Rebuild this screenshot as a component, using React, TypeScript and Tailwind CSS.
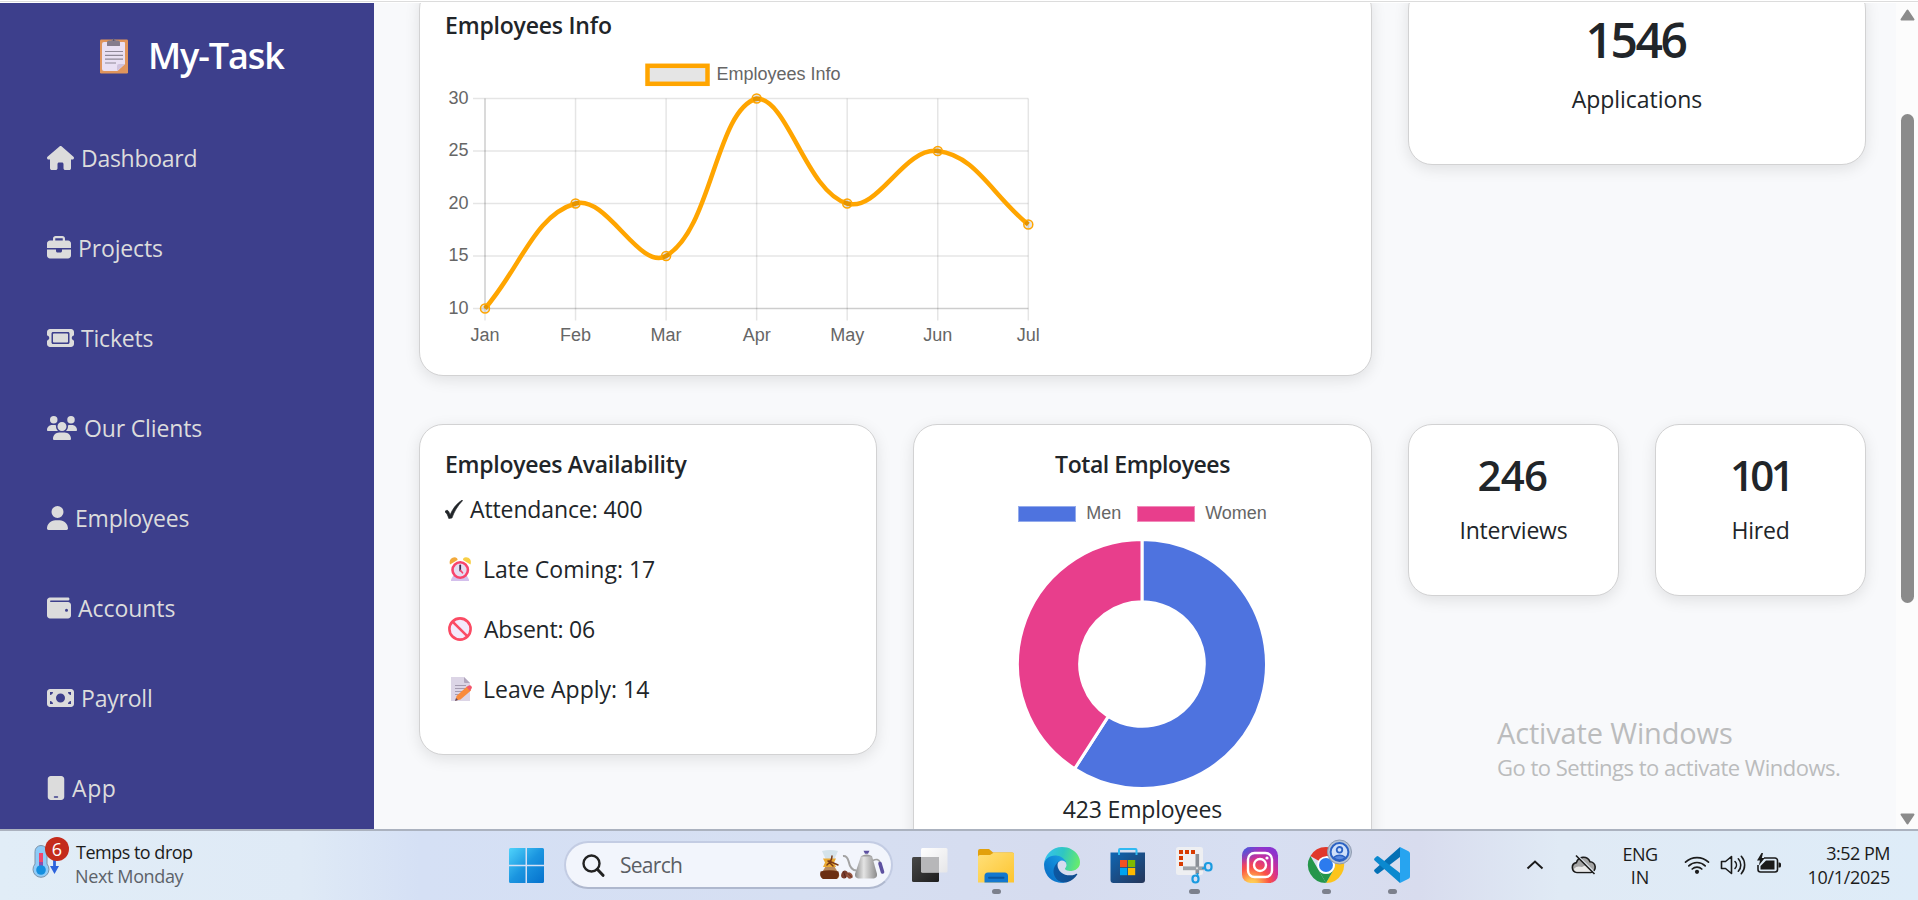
import React from "react";
import { FaHouse, FaBriefcase, FaTicket, FaUsers, FaUser, FaWallet, FaMoneyBill, FaMobile } from "react-icons/fa6";

const nav = [
  { label: "Dashboard", Icon: FaHouse, box: "w-[27px]", track: "tracking-[-0.27px]" },
  { label: "Projects", Icon: FaBriefcase, box: "w-6", track: "tracking-[-0.14px]" },
  { label: "Tickets", Icon: FaTicket, box: "w-[27px]", track: "tracking-[-0.2px]" },
  { label: "Our Clients", Icon: FaUsers, box: "w-[30px]", track: "tracking-[-0.15px]" },
  { label: "Employees", Icon: FaUser, box: "w-[21px]", track: "tracking-[-0.2px]" },
  { label: "Accounts", Icon: FaWallet, box: "w-6", track: "tracking-[-0.05px]" },
  { label: "Payroll", Icon: FaMoneyBill, box: "w-[27px]", track: "tracking-[-0.2px]" },
  { label: "App", Icon: FaMobile, box: "w-[18px]", track: "tracking-[0.6px]" },
];

function ClipboardIcon() {
  return (
    <svg className="h-9 w-7" viewBox="0 0 28 36">
      <rect x="0" y="1.5" width="28" height="34" rx="1.2" fill="#e0955c" />
      <path d="M4 4h20a1 1 0 0 1 1 1v21l-7.500 7H4a2 2 0 0 1-2-2V6a2 2 0 0 1 2-2z" fill="#e9e0f3" />
      <path d="M25 26h-6a2 2 0 0 0-2 2v5z" fill="#cfc2dc" />
      <path d="M7 7.500V4.500a2 2 0 0 1 2-2h2.500a2.300 2.300 0 0 1 4.500 0H18a2 2 0 0 1 2 2v3a.6.6 0 0 1-.6.600H7.600A.6.6 0 0 1 7 7.500z" fill="#857c8c" />
      <circle cx="13.700" cy="2" r=".8" fill="#4c4454" />
      <path d="M5 13.500h18M5 17.300h18M5 21.200h18M5 25h11" stroke="#8f8898" strokeWidth="1.200" />
    </svg>
  );
}

function AlarmIcon() {
  return (
    <svg className="h-6 w-6" viewBox="0 0 24 24">
      <path d="M4 19l-2 3.500V24h18v-1.500L18 19z" fill="#d3bfec" />
      <path d="M1 7.500C-.3 3 2 .4 5.500.2 7.500.2 8.800 1.500 8.500 3z" fill="#f2a93b" />
      <path d="M21.500 7.500C22.800 3 20.500.4 17 .2c-2 0-3.300 1.300-3 2.800z" fill="#f8cf45" />
      <circle cx="11.200" cy="13" r="7.700" fill="#e6ddf2" stroke="#f8446d" strokeWidth="2.600" />
      <path d="M11.200 8.500v5" stroke="#3c2b50" strokeWidth="1.800" strokeLinecap="round" />
      <path d="M11.500 13.500l2 2.300" stroke="#f8446d" strokeWidth="1.700" strokeLinecap="round" />
    </svg>
  );
}

function BlockedIcon() {
  return (
    <svg className="h-6 w-6" viewBox="0 0 24 24">
      <circle cx="12" cy="12" r="10.600" fill="#f4e9fb" stroke="#fb4a63" strokeWidth="2.600" />
      <path d="M4.800 4.800l14.400 14.400" stroke="#fb4a63" strokeWidth="2.600" />
    </svg>
  );
}

function MemoIcon() {
  return (
    <svg className="h-6 w-6" viewBox="0 0 24 24">
      <path d="M1 0h13l6 6v18H1z" fill="#dcd5e6" />
      <path d="M14 0l6 6h-5a1 1 0 0 1-1-1z" fill="#b1a6bd" />
      <path d="M5 8.500h11M5 11.500h11M5 14.500h9M5 17.500h5" stroke="#a49bb0" strokeWidth="1.100" />
      <path d="M5.500 23.500l1-4.500L17 9.500l4 4L10.500 22.500z" fill="#f98b3c" />
      <path d="M16.500 10l1.800-1.200a2.200 2.200 0 0 1 3 3.200L20 14z" fill="#f3566b" />
      <path d="M5 24l1-3 2 2z" fill="#5b4760" />
    </svg>
  );
}

function CheckIcon() {
  return (
    <svg className="h-[19px] w-[18px]" viewBox="0 0 18 19">
      <path d="M0 11.500c1.500-1.600 3-1.700 4.200 1l.9 2.300C7.800 8.500 11.500 3.600 17.200 0l.3.700C12.500 6 9.300 11.300 7 18l-3.200.6C2.800 15.500 1.800 12.700 0 11.900z" fill="#212529" stroke="#212529" strokeWidth=".6" />
    </svg>
  );
}

const months = ["Jan", "Feb", "Mar", "Apr", "May", "Jun", "Jul"];
const values = [10, 20, 15, 30, 20, 25, 18];
const LEFT = 40;
const TOP = 46.5;
const BOTTOM = 256.5;
const STEP = 90.55;
const points = values.map((v, i) => ({ x: LEFT + i * STEP, y: BOTTOM - (v - 10) * 10.5 }));

function smoothPath() {
  const clamp = (y: number) => Math.min(BOTTOM, Math.max(TOP, y));
  const controls = points.map((p, i) => {
    const a = points[i - 1] ?? p;
    const b = points[i + 1] ?? p;
    const d0 = Math.hypot(p.x - a.x, p.y - a.y);
    const d1 = Math.hypot(b.x - p.x, b.y - p.y);
    const f0 = (0.4 * d0) / (d0 + d1);
    const f1 = (0.4 * d1) / (d0 + d1);
    return {
      px: p.x - f0 * (b.x - a.x),
      py: clamp(p.y - f0 * (b.y - a.y)),
      nx: p.x + f1 * (b.x - a.x),
      ny: clamp(p.y + f1 * (b.y - a.y)),
    };
  });
  return points
    .map((p, i) =>
      i === 0
        ? `M${p.x} ${p.y}`
        : `C${controls[i - 1].nx} ${controls[i - 1].ny} ${controls[i].px} ${controls[i].py} ${p.x} ${p.y}`
    )
    .join("");
}

function LineChart() {
  return (
    <svg className="h-[300px] w-[620px] font-['Liberation_Sans',sans-serif] text-[18px]" viewBox="0 0 620 300">
      <rect x="202.500" y="13.800" width="60" height="18" fill="#e5e5e5" stroke="#ffa500" strokeWidth="4.500" />
      <text x="271.500" y="28" fill="#666">Employees Info</text>
      {[30, 25, 20, 15, 10].map((v, i) => (
        <g key={v}>
          <path d={`M28 ${TOP + i * 52.5}H${LEFT + 6 * STEP}`} stroke="#000" strokeOpacity="0.1" strokeWidth="1.500" />
          <text x="23.500" y={TOP + i * 52.5 + 5.3} textAnchor="end" fill="#666">{v}</text>
        </g>
      ))}
      {months.map((m, i) => (
        <g key={m}>
          <path d={`M${LEFT + i * STEP} ${TOP}V268.500`} stroke="#000" strokeOpacity="0.1" strokeWidth="1.500" />
          <text x={LEFT + i * STEP} y="289" textAnchor="middle" fill="#666">{m}</text>
        </g>
      ))}
      <path d={`M${LEFT} ${TOP}V${BOTTOM}H${LEFT + 6 * STEP}`} fill="none" stroke="#000" strokeOpacity="0.1" strokeWidth="1.500" />
      <path d={smoothPath()} fill="none" stroke="#ffa500" strokeWidth="4.500" />
      {points.map((p) => (
        <circle key={p.x} cx={p.x} cy={p.y} r="4.500" fill="#000" fillOpacity="0.1" stroke="#ffa500" strokeWidth="1.500" />
      ))}
    </svg>
  );
}

function sector(from: number, to: number) {
  const at = (r: number, t: number) => `${125 + r * Math.sin(t * 2 * Math.PI)} ${125 - r * Math.cos(t * 2 * Math.PI)}`;
  const big = to - from > 0.5 ? 1 : 0;
  return `M${at(124.5, from)}A124.5 124.5 0 ${big} 1 ${at(124.5, to)}L${at(62.3, to)}A62.3 62.3 0 ${big} 0 ${at(62.3, from)}Z`;
}

function Donut() {
  const men = 250 / 423;
  return (
    <svg className="h-[250px] w-[250px]" viewBox="0 0 250 250">
      <path d={sector(0, men)} fill="#4e73df" stroke="#fff" strokeWidth="3" />
      <path d={sector(men, 1)} fill="#e83e8c" stroke="#fff" strokeWidth="3" />
    </svg>
  );
}

const cardBase = "border border-[#d2d2d3] bg-white p-[25px] shadow-[0_4px_15px_rgba(0,0,0,0.1)] rounded-3xl";

function Stat({ value, label, track }: { value: string; label: string; track: string }) {
  return (
    <div className={`${cardBase} h-[172px] w-[211px] text-center`}>
      <h3 className={`mb-3 text-[42px] font-semibold leading-[50px] ${track}`}>{value}</h3>
      <p className="-mx-2 leading-9 tracking-[-0.2px]">{label}</p>
    </div>
  );
}

function Sidebar() {
  return (
    <aside className="w-[374px] shrink-0 overflow-hidden bg-[#3d3f8c] text-white">
      <div className="flex items-start pl-[100px] pt-[30px]">
        <div className="pt-[5px]"><ClipboardIcon /></div>
        <h1 className="ml-5 mt-px text-[36px] font-semibold leading-[44px] tracking-[-1.1px]">My-Task</h1>
      </div>
      <nav className="mt-[62px] flex flex-col gap-[54px] pl-[47px] text-[#dcdcdc]">
        {nav.map(({ label, Icon, box, track }) => (
          <a key={label} className="flex h-9 items-center gap-[7px]">
            <span className={`flex shrink-0 justify-center text-[24px] ${box}`}>
              <Icon className="h-6 w-full" />
            </span>
            <span className={`text-[23px] leading-9 ${track}`}>{label}</span>
          </a>
        ))}
      </nav>
    </aside>
  );
}

function Main() {
  return (
    <main className="relative w-[1522px] shrink-0 overflow-hidden bg-[#f8f9fb] pl-[45px] text-[23px] text-[#212529]">
      <div className="-mt-[18px] flex items-start gap-9">
        <section className={`${cardBase} h-[391px] w-[953px]`}>
          <h5 className="mb-3 font-semibold leading-[29px] tracking-[-0.2px]">Employees Info</h5>
          <LineChart />
        </section>
        <section className={`${cardBase} h-[180px] w-[458px] text-center`}>
          <h2 className="mb-3 pr-[3px] text-[48px] font-semibold leading-[58px] tracking-[-2.4px]">1546</h2>
          <p className="leading-9 tracking-[-0.05px]">Applications</p>
        </section>
      </div>

      <div className="mt-12 flex items-start gap-9">
        <section className={`${cardBase} h-[331px] w-[458px]`}>
          <h5 className="mb-3 font-semibold leading-[29px] tracking-[-0.27px]">Employees Availability</h5>
          <ul className="flex flex-col gap-6 leading-9">
            <li className="flex items-center tracking-[-0.12px]">
              <CheckIcon />
              <span className="ml-[7px]">Attendance: 400</span>
            </li>
            <li className="flex items-center pl-1">
              <AlarmIcon />
              <span className="ml-[10px]">Late Coming: 17</span>
            </li>
            <li className="flex items-center pl-[3px] tracking-[-0.22px]">
              <BlockedIcon />
              <span className="ml-[12px]">Absent: 06</span>
            </li>
            <li className="flex items-center pl-1">
              <span className="ml-[1px] -mr-[1px]"><MemoIcon /></span>
              <span className="ml-[10px]">Leave Apply: 14</span>
            </li>
          </ul>
        </section>

        <section className={`${cardBase} flex h-[480px] w-[459px] flex-col items-center`}>
          <h5 className="font-semibold leading-[29px] tracking-[-0.44px]">Total Employees</h5>
          <div className="mt-6 flex h-[20px] items-center font-['Liberation_Sans',sans-serif] text-[18px] leading-5 text-[#666]">
            <span className="mt-[2px] h-4 w-[58px] border border-white/40 bg-[#4e73df]" />
            <span className="ml-[10px]">Men</span>
            <span className="ml-4 mt-[2px] h-4 w-[58px] border border-white/40 bg-[#e83e8c]" />
            <span className="ml-[10px]">Women</span>
          </div>
          <div className="mt-[16px] pr-[2px]"><Donut /></div>
          <p className="mt-[2px] leading-9 tracking-[-0.17px]">423 Employees</p>
        </section>

        <Stat value="246" label="Interviews" track="pr-[2px] tracking-[-0.76px]" />
        <Stat value="101" label="Hired" track="tracking-[-3.6px]" />
      </div>

      <div className="absolute left-[1123px] top-[706px] text-[#bbbcbd]">
        <p className="text-[29px] leading-[48px] tracking-[-0.15px]">Activate Windows</p>
        <p className="-mt-[2px] text-[22px] leading-[24px] tracking-[-0.49px]">Go to Settings to activate Windows.</p>
      </div>
    </main>
  );
}

function Scrollbar() {
  return (
    <div className="flex w-[22px] shrink-0 flex-col items-center bg-[#fcfcfc] pb-[4px] pt-[6px]">
      <svg className="h-3 w-[15px]" viewBox="0 0 15 12">
        <path d="M7.500 1.500L13.500 10.500H1.500z" fill="#8b8b8b" stroke="#8b8b8b" strokeWidth="2" strokeLinejoin="round" />
      </svg>
      <div className="mt-[93px] h-[489px] w-[13px] rounded-full bg-[#8b8b8b]" />
      <svg className="mt-auto h-3 w-[15px]" viewBox="0 0 15 12">
        <path d="M7.500 10.500L13.500 1.500H1.500z" fill="#8b8b8b" stroke="#8b8b8b" strokeWidth="2" strokeLinejoin="round" />
      </svg>
    </div>
  );
}

function Defs() {
  return (
    <svg className="absolute h-0 w-0">
      <defs>
        <linearGradient id="win" x1="0" y1="0" x2="1" y2="1">
          <stop offset="0" stopColor="#4fd3fb" />
          <stop offset=".5" stopColor="#1b95e0" />
          <stop offset="1" stopColor="#0571cd" />
        </linearGradient>
        <linearGradient id="folder" x1="0" y1="0" x2="1" y2="1">
          <stop offset="0" stopColor="#ffe07a" />
          <stop offset="1" stopColor="#fdc52f" />
        </linearGradient>
        <linearGradient id="edgeDark" x1="0" y1="0" x2="1" y2="0">
          <stop offset="0" stopColor="#0c59a4" />
          <stop offset="1" stopColor="#114a8b" />
        </linearGradient>
        <linearGradient id="edgeMid" x1=".9" y1=".2" x2=".2" y2=".9">
          <stop offset="0" stopColor="#1b9de2" />
          <stop offset=".5" stopColor="#0f86d6" />
          <stop offset="1" stopColor="#0a6fc6" />
        </linearGradient>
        <linearGradient id="edgeLight" x1="0" y1=".3" x2="1" y2=".5">
          <stop offset="0" stopColor="#35c1f1" />
          <stop offset=".5" stopColor="#2fc6c2" />
          <stop offset="1" stopColor="#66eb6e" />
        </linearGradient>
        <linearGradient id="store" x1="0" y1="0" x2="1" y2="1">
          <stop offset="0" stopColor="#0f66b4" />
          <stop offset="1" stopColor="#253558" />
        </linearGradient>
        <radialGradient id="insta" cx=".27" cy="1.070" r="1.100">
          <stop offset="0" stopColor="#ffd75e" />
          <stop offset=".15" stopColor="#ffc24f" />
          <stop offset=".45" stopColor="#fb5245" />
          <stop offset=".7" stopColor="#d42f93" />
          <stop offset="1" stopColor="#8b34cf" />
        </radialGradient>
        <radialGradient id="instaBlue" cx="0" cy="0" r=".5">
          <stop offset="0" stopColor="#3d5fe0" />
          <stop offset="1" stopColor="#3d5fe0" stopOpacity="0" />
        </radialGradient>
        <linearGradient id="glass" x1="0" y1="0" x2="1" y2="1">
          <stop offset="0" stopColor="#fff" />
          <stop offset="1" stopColor="#e6e6e8" />
        </linearGradient>
        <linearGradient id="dark" x1="0" y1="0" x2="1" y2="1">
          <stop offset="0" stopColor="#484848" />
          <stop offset="1" stopColor="#1d1d1d" />
        </linearGradient>
        <linearGradient id="kettle" x1="0" y1="0" x2="1" y2="0">
          <stop offset="0" stopColor="#8e8e8e" />
          <stop offset=".4" stopColor="#e4e4e4" />
          <stop offset="1" stopColor="#8a8a8a" />
        </linearGradient>
      </defs>
    </svg>
  );
}

function CoffeeArt() {
  return (
    <svg className="h-[30px] w-[66px]" viewBox="0 0 66 30">
      <path d="M3 1q8-2 16 0l-4 9H7z" fill="#d5e3ea" />
      <path d="M7.500 15h7l5.500 9q1 3-2 5H4q-3-2-2-5z" fill="#b98a5e" />
      <path d="M1.500 21.500q9-2.500 18 0 1.500 5-2 7.500H4q-4-2.500-2.500-7.500z" fill="#6b2f12" />
      <path d="M4 8.500h13l-2 4 2 4.500H4l2-4.500z" fill="#eaa932" />
      <path d="M13 6q0 5-5 9M10 11l9 4M9 11l5 5" fill="none" stroke="#7a3a17" strokeWidth="1.500" strokeLinecap="round" />
      <ellipse cx="25.500" cy="24.500" rx="3.200" ry="4" transform="rotate(20 25.500 24.500)" fill="#7c3d2c" />
      <ellipse cx="30.500" cy="25.500" rx="2.800" ry="3.400" transform="rotate(-40 30.500 25.500)" fill="#95523c" />
      <path d="M24.500 21.500l2 6M29 23.500l4 4" stroke="#4e2117" strokeWidth=".8" />
      <path d="M24 6q4-.5 5.500 5 2 9.500 8 9.500" fill="none" stroke="#a3a3a3" strokeWidth="2" />
      <path d="M42 6q5.500-3 11 0l5 18q.5 3.500-3 4.500H39q-3.500-1-3-4.500z" fill="url(#kettle)" />
      <path d="M42 6.500q5.500-4 11 0z" fill="#9d9d9d" />
      <path d="M44.500.8h6l-1.500 3h-3z" fill="#5d51a0" />
      <path d="M54 10.500q5-2.500 7 1.500" fill="none" stroke="#a0a0a0" strokeWidth="1.600" />
      <path d="M61 13.500l2.500 8.500" stroke="#5d51a0" strokeWidth="3.600" strokeLinecap="round" />
    </svg>
  );
}

const dot = (w: string) => <span className={`mt-[6px] h-[5px] rounded-full bg-[#7c808c] ${w}`} />;

function AppSlot({ children, mark }: { children: React.ReactNode; mark?: string }) {
  return (
    <div className="flex h-[69px] w-[66px] flex-col items-center pt-[16px]">
      {children}
      {mark && dot(mark)}
    </div>
  );
}

function Taskbar() {
  const icon = "h-9 w-9 shrink-0 overflow-visible";
  return (
    <footer className="flex h-[71px] shrink-0 items-start border-t-2 border-[#abb2bf] bg-[linear-gradient(90deg,#e1edf7_0px,#dfeaf6_300px,#d5e0f5_420px,#d6dff2_800px,#d6dcef_1050px,#d7dff2_1250px,#d8dcee_1420px,#e0eaf5_1560px,#deecf8_1918px)] text-[18px] text-[#1b1b1b]">
      <div className="flex w-[505px] pl-[31px] pt-[7px]">
        <div className="relative h-[45px] w-[38px]">
          <svg className="h-[45px] w-[38px]" viewBox="0 0 38 45">
            <path d="M4 13.500a6 6 0 0 1 12 0v12.500a8 8 0 1 1-12 0z" fill="#8ecbf8" stroke="#7d93a8" strokeWidth="1" />
            <path d="M10 15v15" stroke="#f0476e" strokeWidth="4" />
            <path d="M10 24v6" stroke="#8a4fae" strokeWidth="4" />
            <circle cx="10" cy="32" r="4.800" fill="#148fdf" />
            <path d="M23.500 20v9" stroke="#2c62dc" strokeWidth="2.800" />
            <path d="M19 28h9l-4.500 8z" fill="#2c62dc" />
          </svg>
          <span className="absolute left-[14px] top-[-1px] flex h-6 w-6 items-center justify-center rounded-full bg-[#c42b1c] text-[18px] leading-none text-white">6</span>
        </div>
        <div className="ml-[7px] leading-6">
          <p className="mt-[2px] tracking-[-0.5px]">Temps to drop</p>
          <p className="-ml-px tracking-[-0.37px] text-[#5c6269]">Next Monday</p>
        </div>
      </div>

      <div className="w-[60px] pl-[4px] pt-[17px]">
        <svg className="h-[35px] w-[35px]" viewBox="0 0 35 35">
          <path d="M1.500 0H16.500V16.800H0V1.500A1.500 1.500 0 0 1 1.500 0zM18 0H33.500A1.500 1.500 0 0 1 35 1.500V16.800H18zM0 18.200H16.500V35H1.500A1.500 1.500 0 0 1 0 33.500zM18 18.200H35V33.500A1.500 1.500 0 0 1 33.500 35H18z" fill="url(#win)" />
        </svg>
      </div>

      <div className="-ml-px mt-[10px] flex h-[48px] w-[329px] items-center rounded-full border-2 border-[#c3cce3] border-b-[#afb8ce] bg-[#f2f5fc] pl-[16px]">
        <svg className="h-[23px] w-[23px]" viewBox="0 0 23 23">
          <circle cx="9.500" cy="9.500" r="8" fill="none" stroke="#222" strokeWidth="2.400" />
          <path d="M15.300 15.300l5.700 6" stroke="#222" strokeWidth="3" strokeLinecap="round" />
        </svg>
        <span className="ml-[15px] text-[21px] leading-none tracking-[-0.72px] text-[#5b5e64]">Search</span>
        <span className="ml-auto mr-[6px]"><CoffeeArt /></span>
      </div>

      <div className="flex pl-[4px]">
        <AppSlot>
          <svg className={icon} viewBox="0 0 36 36">
            <rect x="0" y="10" width="27" height="25" rx="1.500" fill="url(#dark)" />
            <rect x="9" y="1" width="26.500" height="24.500" rx="1.500" fill="url(#glass)" />
            <path d="M9 10h18v15.500H10.500a1.500 1.500 0 0 1-1.500-1.500z" fill="#b7b7b9" />
          </svg>
        </AppSlot>
        <AppSlot mark="w-[9px]">
          <svg className={icon} viewBox="0 0 36 36">
            <path d="M0 4a2 2 0 0 1 2-2h9l4 3.500h19a2 2 0 0 1 2 2V14H0z" fill="#e2a10c" />
            <path d="M0 9.500A2 2 0 0 1 2 8h10l4-2.500h18.500A1.500 1.500 0 0 1 36 7v28.500H0z" fill="url(#folder)" />
            <path d="M6.500 35.500v-6.500a3.500 3.500 0 0 1 3.500-3.500h16.500a3.500 3.500 0 0 1 3.500 3.500v6.500z" fill="#1378cf" />
            <path d="M11 30.700h14.500" stroke="#0b56a0" strokeWidth="2" strokeLinecap="round" />
          </svg>
        </AppSlot>
        <AppSlot>
          <svg className={icon} viewBox="0 0 256 256">
            <path fill="url(#edgeDark)" d="M231 190.500c-3.400 1.800-6.900 3.400-10.500 4.700a101.500 101.500 0 0 1-35.900 6.500c-47.300 0-88.500-32.500-88.500-74.300.1-11.400 6.400-21.900 16.400-27.300-42.800 1.800-53.800 46.400-53.800 72.500 0 73.900 68.100 81.400 82.800 81.400 7.900 0 19.800-2.300 27-4.600l1.300-.4a128.200 128.200 0 0 0 66.600-52.800 4 4 0 0 0-5.400-5.700z" />
            <path fill="url(#edgeMid)" d="M105.700 241.400a79.200 79.200 0 0 1-22.700-21.300 80.700 80.700 0 0 1 29.500-120c3.200-1.500 8.500-4.100 15.600-4a32.400 32.400 0 0 1 25.700 13 31.900 31.900 0 0 1 6.300 18.700c0-.2 24.500-79.600-80-79.600-43.900 0-80 41.600-80 78.200a130.200 130.200 0 0 0 12.100 56 128 128 0 0 0 156.400 67 75.500 75.500 0 0 1-62.800-8z" />
            <path fill="url(#edgeLight)" d="M152.300 148.900c-.9 1-3.300 2.500-3.300 5.700 0 2.600 1.700 5.100 4.700 7.200 14.400 10 41.500 8.700 41.600 8.700 10.700 0 21.100-2.900 30.300-8.300a61.400 61.400 0 0 0 30.400-52.900c.3-22.400-8-37.300-11.300-43.900C223.500 23.900 177.700 0 128 0A128 128 0 0 0 0 126.200c.5-36.500 36.800-66 80-66 3.500 0 23.500.3 42 10.100 16.300 8.600 24.900 19 30.800 29.200 6.200 10.700 7.300 24.100 7.300 29.500s-2.700 13.300-7.800 19.900z" />
          </svg>
        </AppSlot>
        <AppSlot>
          <svg className={icon} viewBox="0 0 36 36">
            <path d="M.5 5.500h34.500V33a3 3 0 0 1-3 3H3.500a3 3 0 0 1-3-3z" fill="url(#store)" />
            <path d="M9 8V3a1 1 0 0 1 1-1h15.500a1 1 0 0 1 1 1v5" fill="none" stroke="#30b9f2" strokeWidth="2" />
            <path d="M10 13h7.200v7.200h-7.200z" fill="#f25022" />
            <path d="M18 13h7.200v7.200h-7.200z" fill="#7fba00" />
            <path d="M10 21h7.200v7.200h-7.200z" fill="#00a4ef" />
            <path d="M18 21h7.200v7.200h-7.200z" fill="#ffb900" />
          </svg>
        </AppSlot>
        <AppSlot mark="w-[11px]">
          <svg className={icon} viewBox="0 0 36 36">
            <rect x="0" y="0" width="27" height="28" rx="2.500" fill="#eeeff2" />
            <path d="M3 3h4v4H3zM9 3h4v4H9zM15 3h4v4h-4zM3 9h4v4H3zM3 15h4v4H3z" fill="#d83b01" />
            <path d="M21.300 7v20" stroke="#8a8f96" strokeWidth="3.600" />
            <path d="M7 21.300h21" stroke="#9da2a8" strokeWidth="3.800" />
            <circle cx="21" cy="21.300" r="1" fill="#e6e6e6" />
            <rect x="29" y="16" width="6.500" height="7.500" rx="3" fill="none" stroke="#1a9be0" strokeWidth="2.200" />
            <rect x="16.500" y="28.500" width="6" height="7" rx="3" fill="none" stroke="#1a9be0" strokeWidth="2.200" />
            <path d="M26 21.500l4-1M21.500 26v4" stroke="#1a9be0" strokeWidth="1.800" />
          </svg>
        </AppSlot>
        <AppSlot>
          <svg className={icon} viewBox="0 0 36 36">
            <rect width="36" height="36" rx="8.500" fill="url(#insta)" />
            <rect width="36" height="36" rx="8.500" fill="url(#instaBlue)" />
            <rect x="6" y="6" width="24" height="24" rx="6.500" fill="none" stroke="#fff" strokeWidth="2.400" />
            <circle cx="18" cy="18" r="6" fill="none" stroke="#fff" strokeWidth="2.400" />
            <circle cx="25" cy="11" r="1.600" fill="#fff" />
          </svg>
        </AppSlot>
        <AppSlot mark="w-[9px]">
          <svg className={icon} viewBox="0 0 36 36">
            <path d="M18 18L2.400 9A18 18 0 0 1 33.600 9H18z" fill="#e0382c" />
            <path d="M2.400 9l7.800 13.500L18 36A18 18 0 0 1 2.400 9z" fill="#25964a" />
            <path d="M18 36l7.800-13.500A9 9 0 0 0 25.800 13.500V9h7.800A18 18 0 0 1 18 36z" fill="#fcc41c" />
            <path d="M10.200 22.500a9 9 0 0 0 15.600 0L18 36z" fill="#25964a" />
            <circle cx="18" cy="18" r="8.800" fill="#fff" />
            <circle cx="18" cy="18" r="7" fill="#2c7bee" />
            <circle cx="31.500" cy="5" r="12" fill="#b6c3d6" stroke="#8f9bb0" strokeWidth="1" />
            <circle cx="31.500" cy="5" r="8.900" fill="#cfe0fa" stroke="#2b62c4" strokeWidth="2" />
            <circle cx="31.500" cy="2.800" r="2.800" fill="none" stroke="#2b62c4" strokeWidth="1.800" />
            <path d="M25.500 10.500q6-4.500 12 0-6 5-12 0z" fill="#5b8ae0" stroke="#2b62c4" strokeWidth="1.400" />
          </svg>
        </AppSlot>
        <AppSlot mark="w-[9px]">
          <svg className={icon} viewBox="0 0 36 36">
            <path d="M26 0v10L4.500 26.500a1.500 1.500 0 0 1-2 0L.6 24.800a1.500 1.500 0 0 1 0-2.200z" fill="#0470b5" />
            <path d="M26 36V26L4.500 9.500a1.500 1.500 0 0 0-2 0L.6 11.200a1.500 1.500 0 0 0 0 2.200z" fill="#0b89cf" />
            <path d="M26 0L34.500 4.200A2.600 2.600 0 0 1 36 6.500V29.500a2.600 2.600 0 0 1-1.500 2.300L26 36z" fill="#27a4f0" />
          </svg>
        </AppSlot>
      </div>

      <div className="flex h-[68px] grow items-center">
        <svg className="ml-[101px] h-[10px] w-[18px]" viewBox="0 0 18 10">
          <path d="M1.500 8.500L9 1.500l7.500 7" fill="none" stroke="#1b1b1b" strokeWidth="2" />
        </svg>
        <svg className="ml-[27px] h-[22px] w-[26px]" viewBox="0 0 26 22">
          <path d="M6 18.500a5 5 0 0 1-.6-9.900A7.200 7.200 0 0 1 19 7.800a5.400 5.400 0 0 1 .8 10.700z" fill="#a5a5a5" stroke="#1b1b1b" strokeWidth="1.600" />
          <path d="M6 17.700q-3-.5-3-3 3-3.500 8-1.700l4-2 7 5q-1 1.700-3 1.700z" fill="#e9e9e9" />
          <path d="M5.500 .5l18 18" stroke="#e4edf6" strokeWidth="1.500" />
          <path d="M5 1.500l18.500 18.500" stroke="#1b1b1b" strokeWidth="1.600" />
        </svg>
        <div className="ml-[18px] w-[50px] text-center leading-6">
          <p className="tracking-[-0.5px]">ENG</p>
          <p className="-mt-px">IN</p>
        </div>
        <svg className="ml-[19px] h-[20px] w-[26px]" viewBox="0 0 26 20">
          <g fill="none" stroke="#1b1b1b" strokeWidth="1.700" strokeLinecap="round">
            <path d="M1.500 7.200a16.500 16.500 0 0 1 23 0" />
            <path d="M4.800 10.800a11.800 11.800 0 0 1 16.400 0" />
            <path d="M8.200 14a7 7 0 0 1 9.600 0" />
          </g>
          <circle cx="13" cy="16.800" r="2.100" fill="#1b1b1b" />
        </svg>
        <svg className="ml-[10px] h-[22px] w-[26px]" viewBox="0 0 26 22">
          <g fill="none" stroke="#1b1b1b" strokeWidth="1.600" strokeLinecap="round" strokeLinejoin="round">
            <path d="M1.500 7.500h4l6-5v17l-6-5h-4z" />
            <path d="M15 7.500a5 5 0 0 1 0 7" />
            <path d="M18.300 4.800a9 9 0 0 1 0 12.400" />
            <path d="M21.300 2.300a13 13 0 0 1 0 17.400" />
          </g>
        </svg>
        <svg className="ml-[10px] -mt-[2px] h-[22px] w-[26px]" viewBox="0 0 26 22">
          <path d="M8 5h11a2.500 2.500 0 0 1 2.500 2.500v9A2.500 2.500 0 0 1 19 19H4.500A2.500 2.500 0 0 1 2 16.500V12" fill="none" stroke="#1b1b1b" strokeWidth="1.600" />
          <path d="M10 7.500h8.500v9h-14V13z" fill="#1b1b1b" />
          <path d="M22.500 9.500h1a1.500 1.500 0 0 1 1.500 1.500v2a1.500 1.500 0 0 1-1.500 1.500h-1z" fill="#1b1b1b" />
          <path d="M5.500 0L1 7.500h3L2.800 12.500 8.800 5H5.800L7 0z" fill="#1b1b1b" />
        </svg>
        <div className="-mt-px ml-auto pr-7 text-right leading-6">
          <p className="tracking-[-0.52px]">3:52 PM</p>
          <p className="tracking-[-0.31px]">10/1/2025</p>
        </div>
      </div>
    </footer>
  );
}

export default function App() {
  return (
    <div className="flex h-[900px] w-[1918px] flex-col overflow-hidden bg-white font-['Open_Sans',sans-serif]">
      <Defs />
      <div className="h-[3px] shrink-0 border-b border-b-white bg-[linear-gradient(#fff_1px,#dcdcdc_1px)]" />
      <div className="flex h-[826px] shrink-0">
        <Sidebar />
        <Main />
        <Scrollbar />
      </div>
      <Taskbar />
    </div>
  );
}
